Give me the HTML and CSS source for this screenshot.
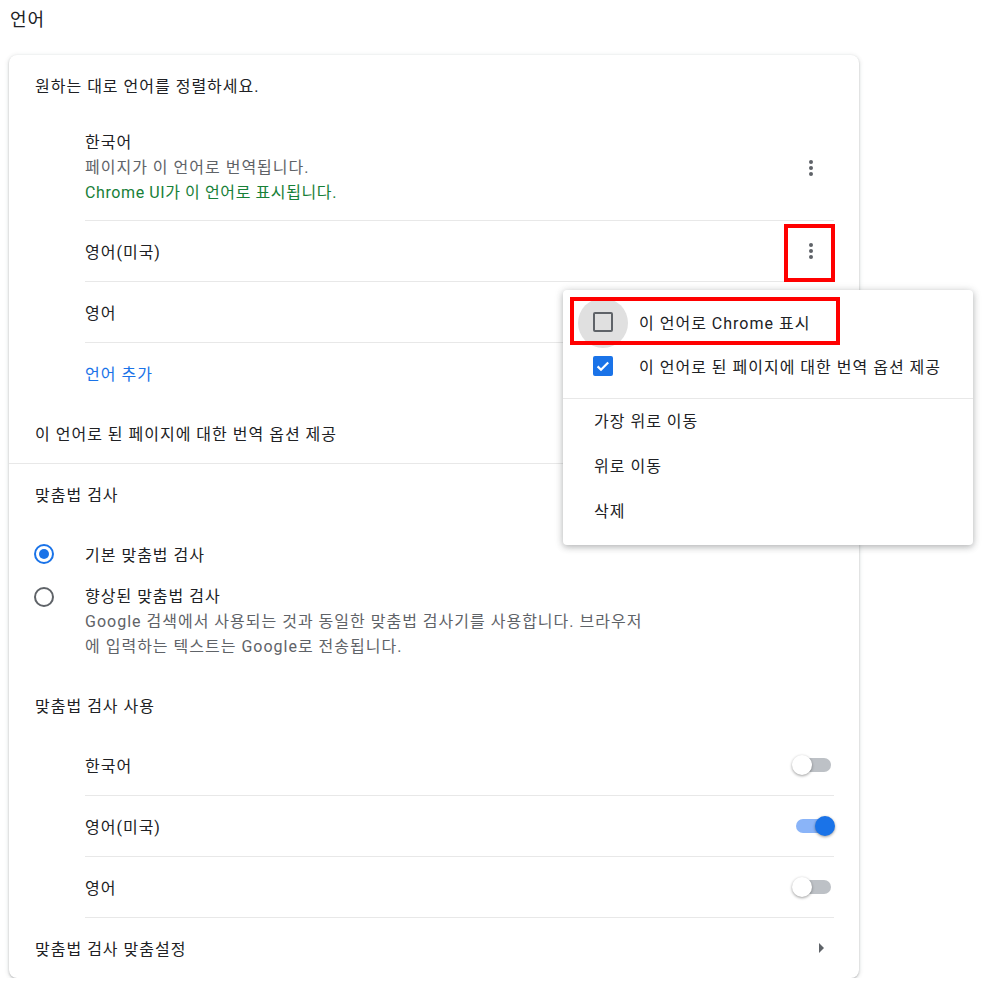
FILE: index.html
```html
<!DOCTYPE html>
<html lang="ko">
<head>
    <meta charset="UTF-8">
    <meta name="viewport" content="width=device-width, initial-scale=1.0">
    <title>언어 설정</title>
    <link rel="stylesheet" href="styles.css">
</head>
<body>

<h1 class="page-title">언어</h1>

<div class="card">
    <div class="row">원하는 대로 언어를 정렬하세요.</div>

    <div class="sub-list">
        <div class="sub-item tall">
            <div class="lines">
                <div>한국어</div>
                <div class="secondary">페이지가 이 언어로 번역됩니다.</div>
                <div class="green">Chrome UI가 이 언어로 표시됩니다.</div>
            </div>
            <button class="kebab" aria-label="더보기"><span></span></button>
        </div>
        <div class="sub-item">
            <span>영어(미국)</span>
            <button class="kebab marked" aria-label="더보기"><span></span></button>
        </div>
        <div class="sub-item">
            <span>영어</span>
        </div>
        <div class="sub-item last">
            <span class="link">언어 추가</span>
        </div>
    </div>

    <div class="row divided">이 언어로 된 페이지에 대한 번역 옵션 제공</div>

    <div class="row">맞춤법 검사</div>

    <div class="radio-row">
        <span class="radio checked"></span>
        <span class="radio-label">기본 맞춤법 검사</span>
    </div>
    <div class="radio-row multi">
        <span class="radio"></span>
        <div class="radio-label">
            <div>향상된 맞춤법 검사</div>
            <div class="secondary">Google 검색에서 사용되는 것과 동일한 맞춤법 검사기를 사용합니다. 브라우저<br>에 입력하는 텍스트는 Google로 전송됩니다.</div>
        </div>
    </div>

    <div class="row">맞춤법 검사 사용</div>

    <div class="sub-list">
        <div class="sub-item">
            <span>한국어</span>
            <span class="toggle"><span class="knob"></span></span>
        </div>
        <div class="sub-item">
            <span>영어(미국)</span>
            <span class="toggle on"><span class="knob"></span></span>
        </div>
        <div class="sub-item">
            <span>영어</span>
            <span class="toggle"><span class="knob"></span></span>
        </div>
    </div>

    <div class="row arrow-row">
        <span>맞춤법 검사 맞춤설정</span>
        <span class="arrow"></span>
    </div>

    <div class="menu">
        <div class="menu-checks">
            <div class="menu-item check-item focused marked">
                <span class="checkbox"></span>
                <span>이 언어로 Chrome 표시</span>
            </div>
            <div class="menu-item check-item">
                <span class="checkbox checked">
                    <svg width="16" height="16" viewBox="0 0 16 16"><path d="M2.6 8.4l3.4 3.4 7.2-7.4" fill="none" stroke="#fff" stroke-width="2.2"/></svg>
                </span>
                <span>이 언어로 된 페이지에 대한 번역 옵션 제공</span>
            </div>
        </div>
        <div class="menu-item">가장 위로 이동</div>
        <div class="menu-item">위로 이동</div>
        <div class="menu-item">삭제</div>
    </div>
</div>

</body>
</html>
```

FILE: styles.css
```css
body {
    margin: 0;
    background-color: #fff;
    color: #202124;
    font-family: Roboto, "Noto Sans CJK KR", sans-serif;
    font-size: 16px;
    letter-spacing: 1px;
}
.page-title {
    margin: 0;
    padding: 8px 0 0 10px;
    font-size: 18px;
    font-weight: normal;
    line-height: 24px;
}
.card {
    position: relative;
    width: 850px;
    margin: 23px 0 0 9px;
    background-color: #fff;
    border-radius: 8px;
    box-shadow: 0 1px 2px rgba(60, 64, 67, 0.3), 0 1px 4px 1px rgba(60, 64, 67, 0.12);
}
.row {
    display: flex;
    align-items: center;
    height: 60px;
    padding: 0 25px 0 26px;
}
.row.divided {
    border-bottom: 1px solid #e8e8e8;
}
.sub-list {
    margin: 0 25px 0 76px;
}
.sub-item {
    display: flex;
    align-items: center;
    justify-content: space-between;
    height: 60px;
    border-bottom: 1px solid #e8e8e8;
}
.sub-item.tall {
    height: 105px;
}
.sub-item.last {
    border-bottom: none;
}
.lines {
    line-height: 25px;
}
.secondary {
    color: #5f6368;
}
.green {
    color: #188038;
    letter-spacing: 0.6px;
}
.link {
    color: #1a73e8;
}

/* kebab button */
.kebab {
    position: relative;
    width: 48px;
    height: 48px;
    margin-right: -1px;
    padding: 0;
    border: none;
    background: none;
    display: flex;
    align-items: center;
    justify-content: center;
}
.kebab span,
.kebab span::before,
.kebab span::after {
    display: block;
    width: 4px;
    height: 4px;
    border-radius: 50%;
    background-color: #5f6368;
}
.kebab span {
    position: relative;
}
.kebab span::before,
.kebab span::after {
    content: "";
    position: absolute;
    left: 0;
}
.kebab span::before {
    top: -6px;
}
.kebab span::after {
    top: 6px;
}
.kebab.marked::after {
    content: "";
    position: absolute;
    left: -3px;
    top: -3px;
    width: 43px;
    height: 50px;
    border: 4px solid #ff0000;
}

/* radios */
.radio-row {
    display: flex;
    align-items: center;
    height: 60px;
    padding-left: 25px;
}
.radio-row.multi {
    align-items: flex-start;
    height: auto;
    padding-bottom: 16px;
    line-height: 25px;
}
.radio-row.multi .radio {
    margin-top: 3px;
}
.radio {
    box-sizing: border-box;
    flex: none;
    width: 20px;
    height: 20px;
    border: 2px solid #5f6368;
    border-radius: 50%;
    margin-right: 31px;
    position: relative;
}
.radio.checked {
    border-color: #1a73e8;
}
.radio.checked::after {
    content: "";
    position: absolute;
    left: 3px;
    top: 3px;
    width: 10px;
    height: 10px;
    border-radius: 50%;
    background-color: #1a73e8;
}

/* toggles */
.toggle {
    position: relative;
    width: 43px;
    height: 20px;
    margin-right: -1px;
}
.toggle::before {
    content: "";
    position: absolute;
    left: 4px;
    top: 3px;
    width: 35px;
    height: 14px;
    border-radius: 7px;
    background-color: #bdc1c6;
}
.toggle .knob {
    position: absolute;
    left: 0;
    top: 0;
    width: 20px;
    height: 20px;
    border-radius: 50%;
    background-color: #fff;
    box-shadow: 0 1px 3px rgba(0, 0, 0, 0.4);
}
.toggle.on::before {
    background-color: #8ab4f8;
}
.toggle.on .knob {
    left: 23px;
    background-color: #1a73e8;
}

.arrow-row {
    justify-content: space-between;
}
.arrow {
    width: 0;
    height: 0;
    margin-right: 10px;
    border-top: 5px solid transparent;
    border-bottom: 5px solid transparent;
    border-left: 5px solid #5f6368;
}

/* popup menu */
.menu {
    position: absolute;
    left: 554px;
    top: 235px;
    width: 410px;
    padding: 11px 0;
    background-color: #fff;
    border-radius: 4px;
    box-shadow: 0 2px 6px rgba(60, 64, 67, 0.3), 0 1px 10px rgba(60, 64, 67, 0.15);
}
.menu-checks {
    padding-bottom: 9px;
    border-bottom: 1px solid #e8e8e8;
}
.menu-item {
    box-sizing: border-box;
    display: flex;
    align-items: center;
    height: 45px;
    padding: 0 0 4px 31px;
}
.menu-checks .menu-item {
    height: 44px;
    padding-bottom: 2px;
}
.check-item {
    position: relative;
}
.checkbox {
    box-sizing: border-box;
    position: relative;
    z-index: 1;
    width: 20px;
    height: 20px;
    margin: 0 26px 0 -1px;
    border: 2px solid #5f6368;
    border-radius: 2px;
    display: flex;
    align-items: center;
    justify-content: center;
}
.checkbox.checked {
    border-color: #1a73e8;
    background-color: #1a73e8;
}
.focused::before {
    content: "";
    position: absolute;
    left: 15px;
    top: -3px;
    width: 50px;
    height: 50px;
    border-radius: 50%;
    background-color: #e0e0e0;
}
.menu-item.marked::after {
    content: "";
    position: absolute;
    left: 7px;
    top: -4px;
    width: 262px;
    height: 40px;
    border: 4px solid #ff0000;
}
```
